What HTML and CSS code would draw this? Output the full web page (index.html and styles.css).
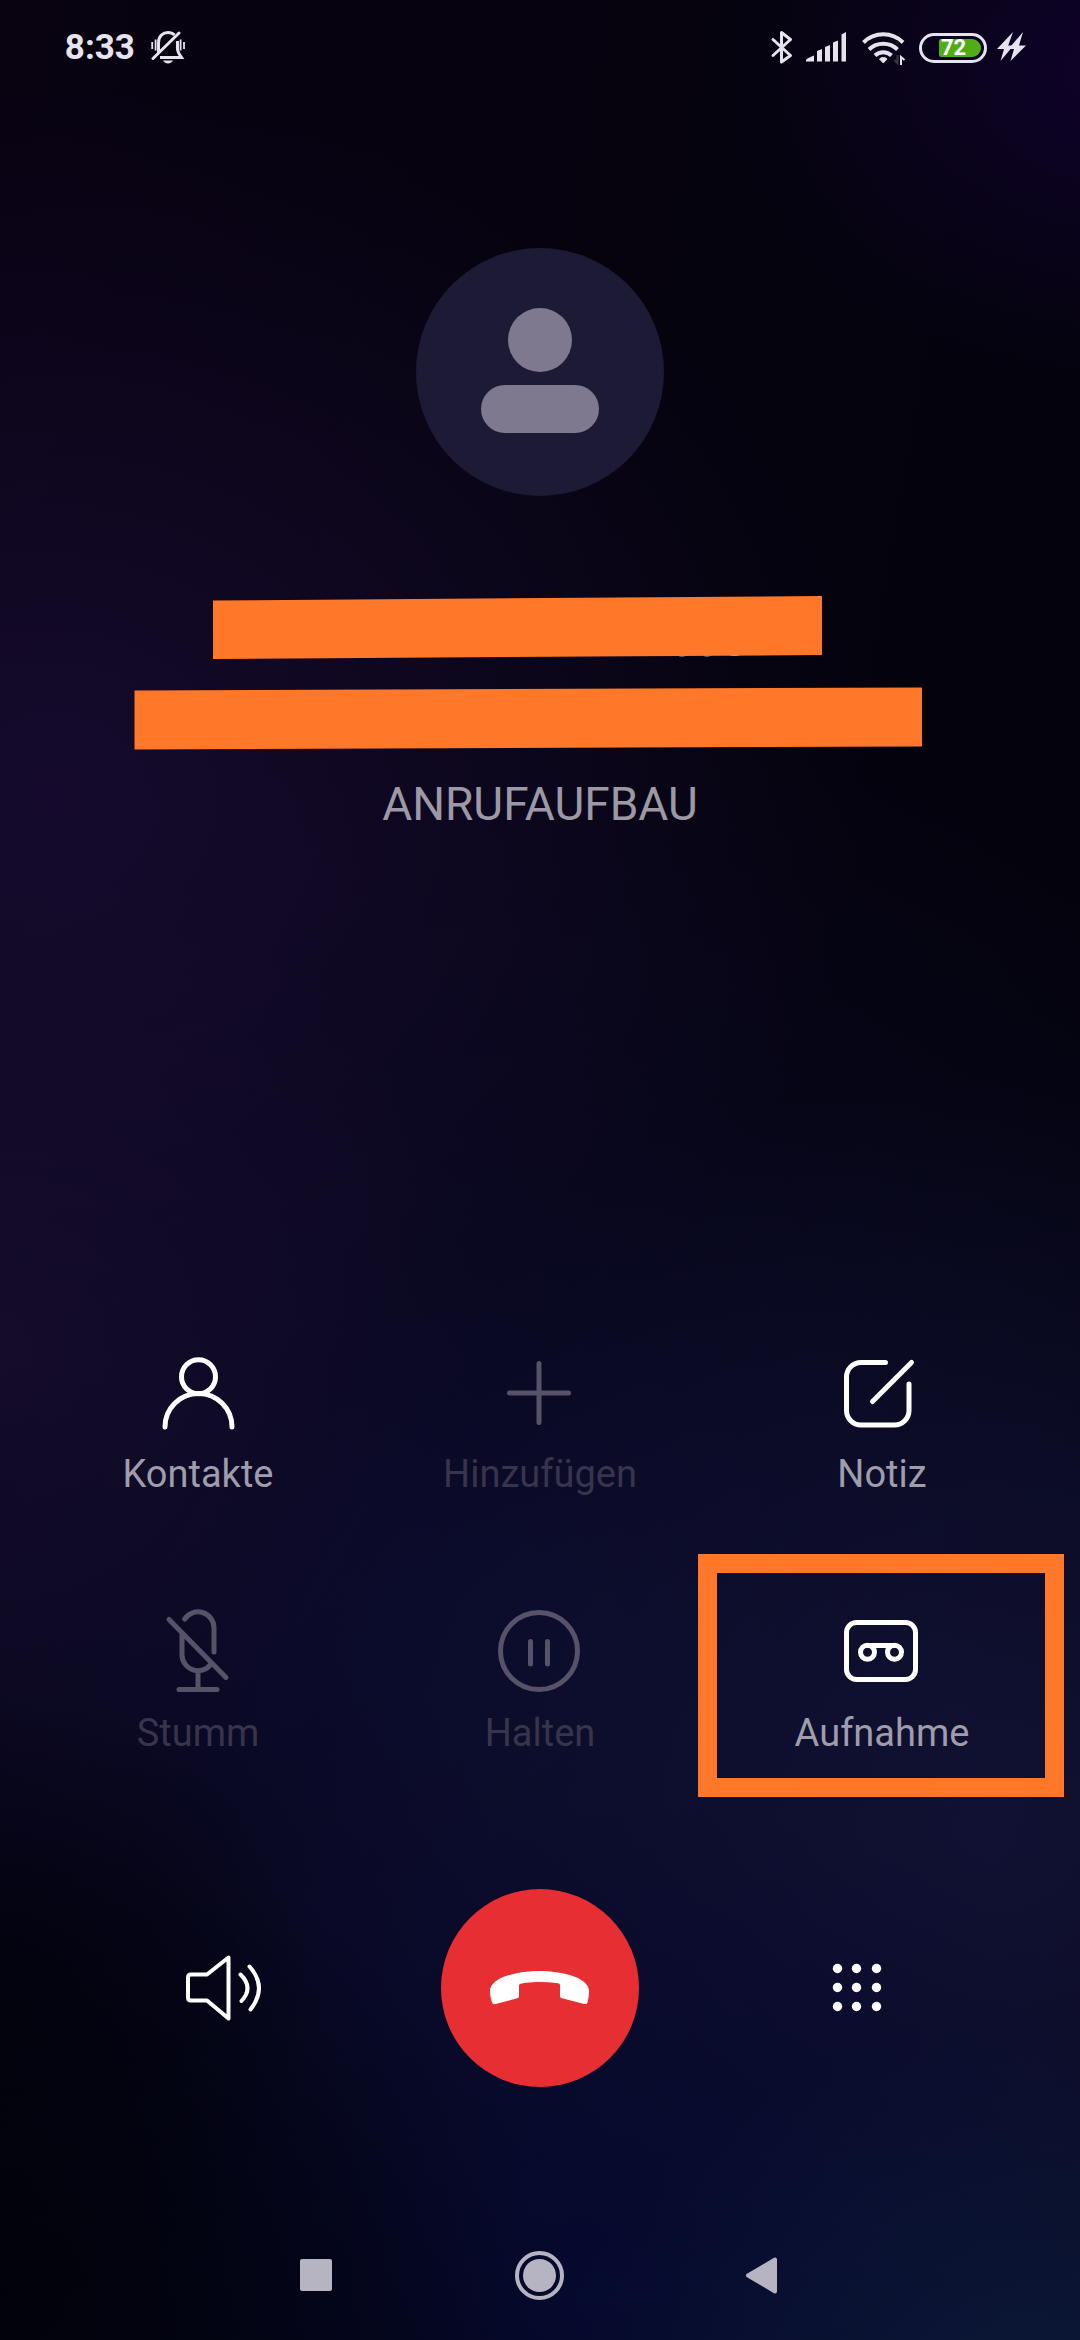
FILE: index.html
```html
<!DOCTYPE html>
<html lang="de">
<head>
<meta charset="utf-8">
<meta name="viewport" content="width=device-width, initial-scale=1">
<title>Anruf</title>
<link rel="stylesheet" href="styles.css">
</head>
<body>
<div class="screen">
  <header class="status">
    <div class="status-side status-left">
      <time class="clock">8:33</time>
      <svg class="status-icon" width="34" height="36" viewBox="0 0 34 36" fill="none" stroke="currentColor" stroke-width="3" aria-label="Stumm">
        <path d="M7.500 23V12.500C7.500 6 12 2.500 17 2.500c3 0 5 1 6.500 2.500M26.500 11v8c0 3 1.500 5 4 8.500H9"/>
        <path d="M2 28.500L28 3" stroke-linecap="round"/>
        <path d="M1.200 12v7M4.600 9.500v11M29.600 9.500v11M33 12v7" stroke-width="1.800"/>
        <path d="M12 30.500h10c-1 2-3 3-5 3s-4-1-5-3z" fill="currentColor" stroke="none"/>
      </svg>
    </div>
    <div class="status-side status-right">
      <svg class="status-icon" width="25" height="36" viewBox="0 0 25 36" fill="none" stroke="currentColor" stroke-width="3" stroke-linejoin="round" stroke-linecap="round" aria-label="Bluetooth">
        <path d="M3 9.500L20.500 25.500L11.500 32V2.500L20.500 9.500L3 25.500"/>
      </svg>
      <svg class="status-icon" width="44" height="36" viewBox="0 0 44 36" fill="currentColor" aria-label="Mobilfunk">
        <path d="M1 31.500V30q0-1.500 8-4.500v6zM12 31.500V21l5-2v12.500zM20 31.500V17l5-2v16.500zM28 31.500V12.500l5-2v21zM36.500 31.500V4.500l4.500-2.500v29.500z"/>
      </svg>
      <svg class="status-icon" width="50" height="36" viewBox="0 0 50 36" fill="none" stroke="currentColor" stroke-width="4" aria-label="WLAN">
        <path d="M4.500 12.500a28 28 0 0 1 39.500 0M10 19.500a20.500 20.500 0 0 1 28.500 0M16 25.500a12 12 0 0 1 16.500 0"/>
        <path d="M20.500 29a5.500 5.500 0 0 1 7.500 0l-3.700 4z" fill="currentColor" stroke-width="1"/>
        <path d="M38.500 25v8l-3-3" stroke="#3a3742" stroke-width="2"/>
        <path d="M42 35V27l3.500 3" stroke-width="2"/>
      </svg>
      <div class="battery"><span class="battery-fill">72</span></div>
      <svg class="status-icon" width="29" height="36" viewBox="0 0 29 36" fill="currentColor" aria-label="Laden">
        <path d="M16 2L0 19h7L3.500 31L16 16H11zM26 2L14 16l-2 3h5L13.500 31L29 15.500h-7z"/>
        <path d="M11 15.500h8v3.500h-8z"/>
      </svg>
    </div>
  </header>

  <main class="call">
    <section class="caller">
      <svg class="avatar" viewBox="0 0 248 248" role="img" aria-label="Kontaktbild">
        <circle cx="124" cy="124" r="124" fill="#1d1a36"/>
        <circle cx="124" cy="92" r="32" fill="#7e798f"/>
        <rect x="65" y="137" width="118" height="48" rx="24" fill="#7e798f"/>
      </svg>
      <svg class="redaction" viewBox="0 0 1080 160" aria-hidden="true">
        <path d="M677 61.500q5 2 10 0zM702 61.500q5 2 10 0zM729 61q6 2 11 0z" fill="#cfc6cc"/>
        <path d="M213 6.500L822 2V61L213 65z" fill="#ff7728"/>
        <path d="M134.500 96.500L922 93.500V152.500L134.500 155.500z" fill="#ff7728"/>
      </svg>
      <p class="call-state">ANRUFAUFBAU</p>
    </section>

    <section class="controls">
      <div class="actions">
        <button class="action" type="button">
          <svg class="icon" viewBox="0 0 96 96"><circle cx="48.500" cy="31.700" r="17"/><path d="M15 82a33.500 33.500 0 0 1 67 0"/></svg>
          <span>Kontakte</span>
        </button>
        <button class="action" type="button" disabled>
          <svg class="icon" viewBox="0 0 96 96"><path d="M47 18.500v59M17.500 48h59"/></svg>
          <span>Hinzufügen</span>
        </button>
        <button class="action" type="button">
          <svg class="icon" viewBox="0 0 96 96"><path d="M51.500 17.500H27a14.500 14.500 0 0 0-14.500 14.500V65.500A14.500 14.500 0 0 0 27 80H60.500A14.500 14.500 0 0 0 75 65.500V39M38.500 56.500L77.500 17.500"/></svg>
          <span>Notiz</span>
        </button>
        <button class="action" type="button" disabled>
          <svg class="icon" viewBox="0 0 96 96"><path d="M34.700 15A16 16 0 0 1 64 23.500V48M32 30V50.700A16 16 0 0 0 61 60M19 15.500L76 73.500M48 67V85.500M29 85.500H67"/></svg>
          <span>Stumm</span>
        </button>
        <button class="action" type="button" disabled>
          <svg class="icon" viewBox="0 0 96 96"><circle cx="47" cy="47" r="38.500"/><path d="M38.500 37.500V60M55.500 37.500V60"/></svg>
          <span>Halten</span>
        </button>
        <button class="action action-marked" type="button">
          <svg class="icon" viewBox="0 0 96 96"><rect x="12.500" y="18.500" width="69" height="57" rx="10"/><circle cx="33.500" cy="48.300" r="7"/><circle cx="60.500" cy="48.300" r="7"/><path d="M33.500 41.500H60.500"/></svg>
          <span>Aufnahme</span>
        </button>
      </div>

      <div class="call-row">
        <button class="round" type="button" aria-label="Lautsprecher">
          <svg class="icon icon-thin" viewBox="0 0 96 96"><path d="M53.500 17.500L32 34.500H16Q13 34.500 13 37.500V57.500Q13 60.500 16 60.500H32L53.500 78.500z"/><path d="M65.500 34.500Q79 47.500 66.500 61M74.500 26.500Q93 47.500 75.500 69.500"/></svg>
        </button>
        <button class="round hangup" type="button" aria-label="Auflegen">
          <svg width="100" height="34" viewBox="0 0 300 102" fill="#fff"><path d="M0 60C0 20 80 0 148 0C216 0 297 20 297 60C297 75 294 92 291 97Q289 100 283 99L213 81Q210 80 210 76V42Q210 38 203 37C165 32 130 32 92 38Q87 39 87 44V76Q87 80 82 82L17 99Q9 101 7 96C3 86 0 75 0 60z"/></svg>
        </button>
        <button class="round" type="button" aria-label="Ziffernblock">
          <svg width="96" height="96" viewBox="0 0 96 96" fill="#fff"><circle cx="28.500" cy="28.500" r="4.700"/><circle cx="47.500" cy="28.500" r="4.700"/><circle cx="67.500" cy="28.500" r="4.700"/><circle cx="28.500" cy="47.500" r="4.700"/><circle cx="47.500" cy="47.500" r="4.700"/><circle cx="67.500" cy="47.500" r="4.700"/><circle cx="28.500" cy="66.500" r="4.700"/><circle cx="47.500" cy="66.500" r="4.700"/><circle cx="67.500" cy="66.500" r="4.700"/></svg>
        </button>
      </div>
    </section>
  </main>

  <nav class="navbar">
    <button class="nav-button" type="button" aria-label="Übersicht">
      <svg width="50" height="50" viewBox="0 0 50 50" fill="currentColor"><rect x="8" y="8" width="32" height="32" rx="2"/></svg>
    </button>
    <button class="nav-button" type="button" aria-label="Startseite">
      <svg width="50" height="50" viewBox="0 0 50 50" fill="currentColor"><circle cx="24.500" cy="24.500" r="16.500"/><circle cx="24.500" cy="24.500" r="22.500" fill="none" stroke="currentColor" stroke-width="4"/></svg>
    </button>
    <button class="nav-button" type="button" aria-label="Zurück">
      <svg width="50" height="50" viewBox="0 0 50 50" fill="currentColor" stroke="currentColor" stroke-width="4" stroke-linejoin="round"><path d="M10 24.500L37 8.500V40.500z"/></svg>
    </button>
  </nav>
</div>
</body>
</html>
```
FILE: styles.css
```css
* {
  box-sizing: border-box;
}

body {
  margin: 0;
  background: #04030c;
  color: #fff;
  font-family: Roboto, "Noto Sans", sans-serif;
}

button {
  margin: 0;
  padding: 0;
  border: 0;
  background: none;
  color: inherit;
  font: inherit;
}

svg {
  display: block;
}

.screen {
  display: flex;
  flex-direction: column;
  min-height: 100vh;
  background:
    radial-gradient(ellipse 36% 13% at 104% 3%, rgba(20, 2, 54, 0.7), transparent),
    radial-gradient(ellipse 50% 20% at 0% 98%, rgba(0, 2, 8, 0.9), transparent),
    radial-gradient(ellipse 30% 14% at 0% 86%, rgba(2, 2, 12, 0.8), transparent),
    radial-gradient(ellipse 50% 18% at 100% 104%, rgba(14, 30, 66, 0.8), transparent),
    radial-gradient(ellipse 60% 22% at 55% 98%, rgba(4, 10, 54, 0.7), transparent),
    radial-gradient(ellipse 75% 32% at 92% 78%, rgba(19, 20, 56, 0.85), transparent),
    radial-gradient(ellipse 45% 22% at 0% 58%, rgba(24, 14, 46, 0.7), transparent),
    radial-gradient(ellipse 75% 30% at 5% 34%, rgba(24, 12, 50, 0.85), transparent),
    radial-gradient(ellipse 100% 40% at 40% 70%, rgba(10, 11, 46, 0.85), transparent),
    linear-gradient(100deg, #080211, #05030e 55%, #03030c);
}

.status {
  display: flex;
  justify-content: space-between;
  align-items: center;
  height: 96px;
  padding: 0 5% 0 6%;
  color: #e6e3ec;
}

.status-side {
  display: flex;
  align-items: center;
}

.status-left {
  gap: 16px;
}

.status-right {
  gap: 10px;
}

.clock {
  font-size: 35px;
  line-height: 42px;
  font-weight: 700;
}

.battery {
  width: 68px;
  height: 30px;
  padding: 3px;
  border: 3px solid currentColor;
  border-radius: 15px;
}

.battery-fill {
  display: block;
  width: 42px;
  height: 18px;
  margin-left: auto;
  padding-left: 2px;
  border-radius: 2px 9px 9px 2px;
  background: #4fae17;
  color: #fff;
  font-size: 22px;
  line-height: 18px;
  font-weight: 700;
}

.call {
  display: flex;
  flex: 1;
  flex-direction: column;
  justify-content: space-between;
  gap: 64px;
}

.caller {
  display: flex;
  flex-direction: column;
  align-items: center;
  padding-top: 152px;
}

.avatar {
  width: 248px;
  height: 248px;
}

.redaction {
  width: 100%;
  margin-top: 98px;
}

.call-state {
  margin: 22px 0 0;
  color: #9c99a5;
  font-size: 46px;
  line-height: 56px;
}

.actions {
  display: grid;
  grid-template-columns: repeat(3, 1fr);
  row-gap: 106px;
  padding: 0 27px;
}

.action {
  position: relative;
  display: flex;
  flex-direction: column;
  align-items: center;
  gap: 9px;
  color: #9f9cab;
  font-size: 38px;
  line-height: 48px;
}

.icon {
  width: 96px;
  height: 96px;
  fill: none;
  stroke: #fff;
  stroke-width: 5;
  stroke-linecap: round;
  stroke-linejoin: round;
}

.icon-thin {
  stroke-width: 4;
}

.action:disabled {
  color: #37344b;
}

.action:disabled .icon {
  stroke: #565368;
}

.action-marked::after {
  content: "";
  position: absolute;
  inset: -50px -11px -40px -13px;
  border: 19px solid #ff7728;
}

.call-row {
  display: grid;
  grid-template-columns: repeat(3, 1fr);
  justify-items: center;
  margin-top: 132px;
  padding: 0 6%;
}

.round {
  display: flex;
  align-items: center;
  justify-content: center;
  width: 198px;
  height: 198px;
  border-radius: 50%;
}

.hangup {
  background: #e72e32;
}

.navbar {
  display: grid;
  grid-template-columns: repeat(3, 1fr);
  justify-items: center;
  align-items: center;
  height: 129px;
  margin-top: 124px;
  padding: 0 19%;
  color: #b6b4c2;
}
```
